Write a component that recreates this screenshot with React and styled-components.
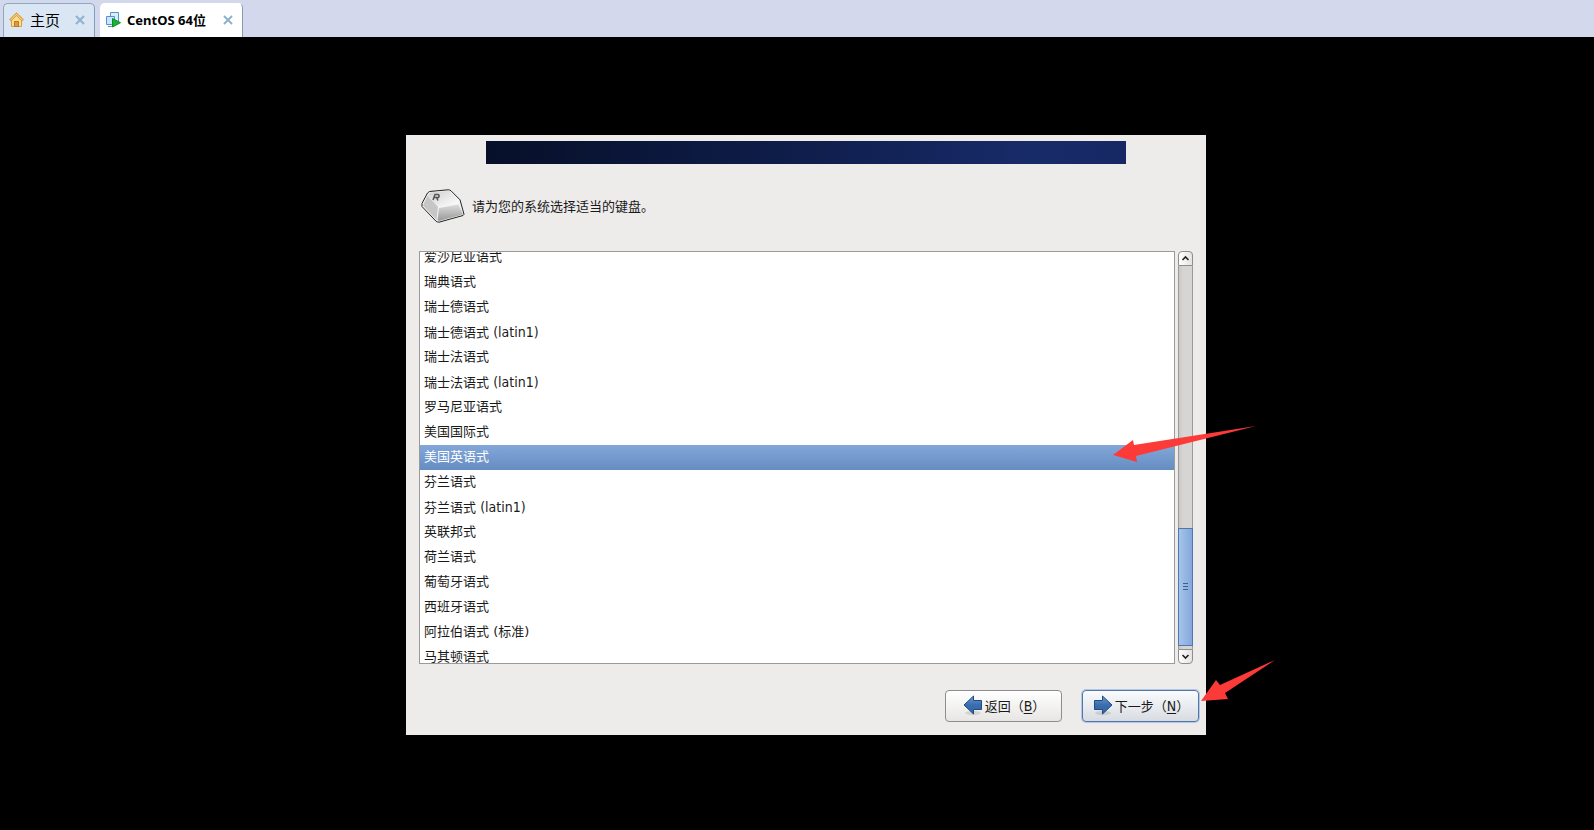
import React, { useState } from "react";
import styled, { createGlobalStyle } from "styled-components";

const GlobalStyle = createGlobalStyle`
  * {
    box-sizing: border-box;
  }
  body {
    margin: 0;
    background: #000;
  }
  button {
    font: inherit;
    color: inherit;
  }
`;

const Page = styled.div`
  position: relative;
  min-height: 100vh;
  display: flex;
  flex-direction: column;
  color: #1a1a1a;
  font-family: "DejaVu Sans", "Noto Sans CJK SC", sans-serif;
  font-size: 13px;
`;

const TabBar = styled.nav`
  height: 37px;
  display: flex;
  align-items: flex-end;
  gap: 5px;
  padding-left: 3px;
  background: #d3d8ec;
`;

const Tab = styled.div`
  height: 34px;
  display: flex;
  align-items: center;
  padding: 0 7px 2px 5px;
  border: 1px solid ${(props) => (props.$active ? "#fff" : "#8aa9c4")};
  border-right-color: #7f9fba;
  border-bottom: 0;
  border-radius: 5px 5px 0 0;
  background: ${(props) => (props.$active ? "#fff" : "#dae6f4")};
`;

const TabName = styled.button`
  display: flex;
  align-items: center;
  gap: 6px;
  padding: 0;
  border: 0;
  background: none;
  color: #000;
  font-family: "Noto Sans", "Noto Sans CJK SC", sans-serif;
  font-size: ${(props) => (props.$active ? 13 : 15)}px;
  font-weight: ${(props) => (props.$active ? 700 : 400)};
  line-height: 20px;
`;

const TabClose = styled.button`
  display: flex;
  margin-left: ${(props) => (props.$active ? 15 : 13)}px;
  padding: 2px;
  border: 0;
  background: none;
`;

const Screen = styled.main`
  flex: 1;
  display: flex;
  align-items: center;
  justify-content: center;
  padding: 2px 0 0 18px;
`;

const Installer = styled.section`
  width: 800px;
  max-width: 100%;
  display: flex;
  flex-direction: column;
  padding: 6px 13px 13px;
  background: #edeceb;
`;

const Banner = styled.div`
  width: 640px;
  max-width: 100%;
  height: 23px;
  align-self: center;
  background: linear-gradient(90deg, #071029, #0e1c48 45%, #182b69 85%, #162864);
`;

const Question = styled.header`
  height: 87px;
  display: flex;
  align-items: center;
  gap: 7px;
  padding: 0 0 2px 2px;
`;

const Title = styled.h1`
  margin: 0;
  padding-bottom: 2px;
  font-size: 13px;
  font-weight: 400;
`;

const Picker = styled.div`
  height: 413px;
  display: flex;
  gap: 3px;
`;

const ListFrame = styled.div`
  flex: 1;
  display: flex;
  align-items: center;
  overflow: hidden;
  border: 1px solid #9c9a98;
  background: #fff;
`;

const List = styled.ul`
  flex: 1;
  margin: 0;
  padding: 0;
  list-style: none;
`;

const Layout = styled.button`
  width: 100%;
  height: 25px;
  display: block;
  padding: 0 4px;
  border: 0;
  text-align: left;
  line-height: 24px;
  color: ${(props) => (props.$selected ? "#fff" : "#1a1a1a")};
  background: ${(props) =>
    props.$selected ? "linear-gradient(#83a7d9, #658dc2)" : "#fff"};
`;

const Charset = styled.span`
  font-family: "DejaVu Sans Condensed", "DejaVu Sans", sans-serif;
  font-size: 14px;
`;

const Mnemonic = styled.u`
  font-family: "DejaVu Sans Condensed", "DejaVu Sans", sans-serif;
  font-size: 14px;
  text-underline-offset: 2px;
`;

const Scrollbar = styled.div`
  width: 15px;
  display: flex;
  flex-direction: column;
`;

const ScrollButton = styled.button`
  height: 15px;
  display: flex;
  align-items: center;
  justify-content: center;
  padding: 0;
  border: 1px solid #8f8d8b;
  border-radius: ${(props) => (props.$down ? "0 0 4px 4px" : "4px 4px 0 0")};
  background: linear-gradient(90deg, #fff, #e4e3e2);
`;

const Track = styled.div`
  flex: 1;
  display: flex;
  flex-direction: column;
  justify-content: flex-end;
  padding-bottom: 3px;
  background: linear-gradient(90deg, #9c9a98 1px, #c9c8c6 1px, #d6d5d3 5px, #d6d5d3 14px, #9c9a98 14px);
`;

const Thumb = styled.div`
  height: 118px;
  display: flex;
  flex-direction: column;
  align-items: center;
  justify-content: center;
  gap: 2px;
  border: 1px solid #5078b0;
  background: linear-gradient(90deg, #a6c4ea, #84a8da);
`;

const Grip = styled.span`
  width: 5px;
  height: 1px;
  background: #3d608f;
`;

const Actions = styled.footer`
  display: flex;
  justify-content: flex-end;
  gap: 20px;
  margin: 26px -6px 0 0;
`;

const Action = styled.button`
  width: 117px;
  height: 32px;
  display: flex;
  align-items: center;
  justify-content: center;
  gap: 2px;
  padding: 0 0 1px 1px;
  white-space: nowrap;
  border: 1px solid ${(props) => (props.$primary ? "#5177aa" : "#8f8d8b")};
  border-radius: 4px;
  background: ${(props) =>
    props.$primary
      ? "linear-gradient(#f9fbfd, #d8dce2)"
      : "linear-gradient(#fff, #e7e6e4)"};
  box-shadow: ${(props) => (props.$primary ? "0 0 0 1px #b3c8e4" : "none")};
`;

const Pointer = styled.svg`
  position: absolute;
  left: calc(50% + ${(props) => props.$x}px);
  top: calc(50% + ${(props) => props.$y}px);
  fill: #fc3a37;
  pointer-events: none;
`;

const layouts = [
  { name: "爱沙尼亚语式" },
  { name: "瑞典语式" },
  { name: "瑞士德语式" },
  { name: "瑞士德语式", charset: "(latin1)" },
  { name: "瑞士法语式" },
  { name: "瑞士法语式", charset: "(latin1)" },
  { name: "罗马尼亚语式" },
  { name: "美国国际式" },
  { name: "美国英语式" },
  { name: "芬兰语式" },
  { name: "芬兰语式", charset: "(latin1)" },
  { name: "英联邦式" },
  { name: "荷兰语式" },
  { name: "葡萄牙语式" },
  { name: "西班牙语式" },
  { name: "阿拉伯语式 (标准)" },
  { name: "马其顿语式" },
];

const HomeIcon = () => (
  <svg width="15" height="16" viewBox="0 0 15 16">
    <path d="M2.500 8v6.500h10V8l-5-5z" fill="#fde08b" stroke="#dc9a3e" />
    <path d="M1 8.500 7.500 2 14 8.500" fill="none" stroke="#dc9a3e" strokeWidth="2.600" />
    <path d="M1.500 8.200 7.500 2.200l6 6" fill="none" stroke="#ffe3a0" />
    <path d="M5.500 14.500v-5h4v5z" fill="#d99b45" stroke="#b87929" />
  </svg>
);

const MachineIcon = () => (
  <svg width="15" height="16" viewBox="0 0 15 16">
    <path d="M4.500.5h8v9h-8z" fill="#d9edff" stroke="#5593cf" />
    <path d="M.5 4.500h8v8h-8z" fill="#cae5ff" stroke="#5593cf" />
    <path d="M2 14.500h5" stroke="#5593cf" />
    <path d="M6.500 6.500v8.500l8-4.300z" fill="#18b334" stroke="#0c8d24" />
  </svg>
);

const CloseIcon = () => (
  <svg width="10" height="10" viewBox="0 0 10 10">
    <path d="m1 1 8 8M9 1 1 9" stroke="#8fb0cf" strokeWidth="2" />
  </svg>
);

const KeycapIcon = () => (
  <svg width="44" height="34" viewBox="0 0 44 34">
    <defs>
      <linearGradient id="keyTop" x1="0" y1="0" x2="1" y2="1">
        <stop offset="0" stopColor="#cfcfcf" />
        <stop offset="1" stopColor="#fff" />
      </linearGradient>
      <linearGradient id="keyFront" x1="0" y1="0" x2="0" y2="1">
        <stop offset="0" stopColor="#dcdcdc" />
        <stop offset="1" stopColor="#999" />
      </linearGradient>
    </defs>
    <path
      d="M8.500 2.500 27 .8q2 0 3 1l9 9 4 14.500-1 1.200L18 33.200q-1.500 0-3-1L1 17.500v-3L6.500 4z"
      fill="#f4f4f4"
      stroke="#222"
    />
    <path d="M9 3.500 28 1.800l10 10-1.500 3-18.500 3-2-1L7 6z" fill="url(#keyTop)" />
    <path d="m18 19 19.500-3.500 4.500 10-24 6.500-1.500-1z" fill="url(#keyFront)" />
    <path d="M6.500 6.500 17 18l-1.500 13L2 16.500z" fill="#c6c6c6" />
    <path d="m12 11 2-5.500h3q2 .5.500 3h-4m2 0 1.500 3" fill="none" stroke="#555" strokeWidth="1.500" />
  </svg>
);

const ChevronIcon = ({ down }) => (
  <svg width="9" height="7" viewBox="0 0 9 7">
    <path
      d={down ? "m1.500 2 3 3 3-3" : "m1.500 5 3-3 3 3"}
      fill="none"
      stroke="#222"
      strokeWidth="1.600"
    />
  </svg>
);

const ArrowIcon = ({ back }) => (
  <svg width="20" height="22" viewBox="0 0 20 22">
    <defs>
      <linearGradient id="arrowFill" x1="0" y1="0" x2="0" y2="1">
        <stop offset="0" stopColor="#6e9ad0" />
        <stop offset=".5" stopColor="#3b6cac" />
        <stop offset="1" stopColor="#3465a4" />
      </linearGradient>
    </defs>
    <ellipse cx="10" cy="19" rx="8" ry="2.200" fill="#000" opacity=".1" />
    <path
      d={
        back
          ? "M1 11 10.500 2v4.500h8v9h-8V20z"
          : "M19 11 9.500 2v4.500h-8v9h8V20z"
      }
      fill="url(#arrowFill)"
      stroke="#204a87"
    />
  </svg>
);

const App = () => {
  const [selected, setSelected] = useState(8);

  return (
    <Page>
      <GlobalStyle />
      <TabBar>
        <Tab>
          <TabName>
            <HomeIcon />
            主页
          </TabName>
          <TabClose aria-label="关闭主页">
            <CloseIcon />
          </TabClose>
        </Tab>
        <Tab $active>
          <TabName $active>
            <MachineIcon />
            CentOS 64位
          </TabName>
          <TabClose $active aria-label="关闭 CentOS 64位">
            <CloseIcon />
          </TabClose>
        </Tab>
      </TabBar>
      <Screen>
        <Installer>
          <Banner />
          <Question>
            <KeycapIcon />
            <Title>请为您的系统选择适当的键盘。</Title>
          </Question>
          <Picker>
            <ListFrame>
              <List>
                {layouts.map((layout, index) => (
                  <li key={index}>
                    <Layout
                      $selected={index === selected}
                      aria-pressed={index === selected}
                      onClick={() => setSelected(index)}
                    >
                      {layout.name}
                      {layout.charset && <> <Charset>{layout.charset}</Charset></>}
                    </Layout>
                  </li>
                ))}
              </List>
            </ListFrame>
            <Scrollbar>
              <ScrollButton aria-label="向上滚动">
                <ChevronIcon />
              </ScrollButton>
              <Track>
                <Thumb>
                  <Grip />
                  <Grip />
                  <Grip />
                </Thumb>
              </Track>
              <ScrollButton $down aria-label="向下滚动">
                <ChevronIcon down />
              </ScrollButton>
            </Scrollbar>
          </Picker>
          <Actions>
            <Action>
              <ArrowIcon back />
              <span>
                返回（<Mnemonic>B</Mnemonic>）
              </span>
            </Action>
            <Action $primary>
              <ArrowIcon />
              <span>
                下一步（<Mnemonic>N</Mnemonic>）
              </span>
            </Action>
          </Actions>
        </Installer>
      </Screen>
      <Pointer $x={316} $y={10} width="144" height="38" viewBox="0 0 144 38">
        <path d="M0 30 20 15l1 5L143 1 23 31l1 6z" />
      </Pointer>
      <Pointer $x={404} $y={245} width="74" height="42" viewBox="0 0 74 42">
        <path d="M0 41 15 20l4 5L74 0 24 33l3 6z" />
      </Pointer>
    </Page>
  );
};

export default App;
